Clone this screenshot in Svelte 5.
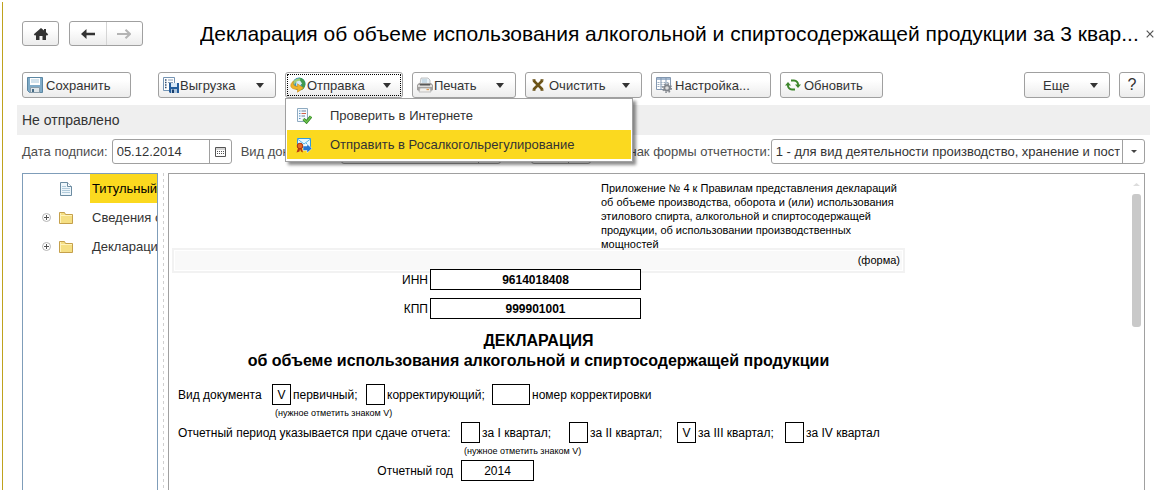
<script lang="ts">
	let menuOpen = $state(true);
	let signDate = $state('05.12.2014');
	let correction = $state('');
	let current = $state('title');

	const tree = [
		{ id: 'title', label: 'Титульный', folder: false },
		{ id: 'info', label: 'Сведения об организации', folder: true },
		{ id: 'decl', label: 'Декларация', folder: true }
	];

	const quarters = [
		{ label: 'за I квартал;', checked: false },
		{ label: 'за II квартал;', checked: false },
		{ label: 'за III квартал;', checked: true },
		{ label: 'за IV квартал', checked: false }
	];
</script>

{#snippet caret()}
	<svg class="caret" width="8" height="5" viewBox="0 0 8 5" aria-hidden="true"><path d="M0 0h8L4 5z" fill="#333" /></svg>
{/snippet}

{#snippet smallCaret()}
	<svg width="6" height="3" viewBox="0 0 6 3" aria-hidden="true"><path d="M0 0h6L3 3z" fill="#444" /></svg>
{/snippet}

<div class="page">
	<main class="window">
		<header>
			<button class="btn home" aria-label="Начальная страница">
				<svg width="16" height="14" viewBox="0 0 16 14"><path d="M8 1 .8 7.200l1.200 1.500 1-.7V13h3.500V9h3v4H13V8l1 .7 1.200-1.500L13 5.300V2h-2v1.600z" fill="#333" /></svg>
			</button>
			<div class="nav">
				<button aria-label="Назад">
					<svg width="14" height="10" viewBox="0 0 14 10"><path d="M0 5 5.500 0v3.700H14v2.600H5.500V10z" fill="#333" /></svg>
				</button>
				<button aria-label="Вперед">
					<svg width="14" height="10" viewBox="0 0 14 10"><path d="M8.500.7 13 5 8.500 9.300M12.500 5H0" fill="none" stroke="#b4b4b4" stroke-width="2" /></svg>
				</button>
			</div>
			<h1>Декларация об объеме использования алкогольной и спиртосодержащей продукции за 3 квар...</h1>
			<button class="close" aria-label="Закрыть">
				<svg width="8" height="8" viewBox="0 0 8 8"><path d="m.7.7 6.600 6.600M7.300.7.7 7.300" stroke="#555" stroke-width="1.200" /></svg>
			</button>
		</header>

		<div class="toolbar">
			<button class="btn save">
				<svg width="16" height="16" viewBox="0 0 16 16">
					<path d="M.5.5h15v15H2.500l-2-2z" fill="#7fabc8" stroke="#5c87a3" />
					<path d="M3 1h10v7H3z" fill="#fff" />
					<path d="M4 3h8M4 5h8" stroke="#a5c5d9" />
					<path d="M3.500 10.500h9v5h-9z" fill="#dfe6ea" stroke="#8a9daa" />
					<path d="M5 12h2v3H5z" fill="#486d87" />
				</svg>
				<span>Сохранить</span>
			</button>
			<button class="btn tight export">
				<svg width="16" height="16" viewBox="0 0 16 16">
					<path d="M.5.5h11v13H.5z" fill="#fff" stroke="#7595b5" />
					<path d="M2 3h1.500M2 5.500h1.500M2 8h1.500M2 10.500h1.500" stroke="#334f72" stroke-width="1.300" />
					<path d="M5 3h5M5 5.500h5" stroke="#8a9db3" />
					<path d="M6 6h10v10H7l-1-1z" fill="#245d9c" />
					<path d="M8 6h6v4H8z" fill="#d9e9f7" />
					<path d="M8 12h6v4H8z" fill="#adc5dc" />
					<path d="M9 12.500h2V16H9z" fill="#173d6c" />
				</svg>
				<span>Выгрузка</span>
				{@render caret()}
			</button>
			<div class="dropdown">
				<button class="btn tight send" aria-expanded={menuOpen} onclick={() => (menuOpen = !menuOpen)}>
					<svg width="16" height="16" viewBox="0 0 16 16">
						<circle cx="9" cy="7" r="6.500" fill="#3f93bd" />
						<path d="M9 .8c4 0 6.500 3 6.300 6.700-.2 3-2 5-4.300 5.700l1-5-4-3z" fill="#3f9a4e" />
						<path d="M3 5C4.500 1.800 8 .8 10.500 1.800L9.500 4 6 5.500 4 8z" fill="#9fce7c" />
						<path d="M6.500 4.500 10 3.500l2 3-3 3-3-1z" fill="#d9ecf5" />
						<path d="M3.500 4C-.5 7-.8 12.500 7.500 12.300v2.900l6-4.200-6-4.200v2.700C4 9.500 2.500 7.500 3.500 4z" fill="#f0b428" stroke="#cf9118" stroke-width=".6" />
					</svg>
					<span>Отправка</span>
					{@render caret()}
				</button>
				{#if menuOpen}
					<div class="menu" role="menu">
						<button role="menuitem">
							<svg width="16" height="16" viewBox="0 0 16 16">
								<path d="M1.500.5h10v13h-10z" fill="#f5faff" stroke="#8eaac0" />
								<path d="M3 3h1.500M3 5.500h1.500M3 8h1.500M3 10.500h1.500" stroke="#5b92bf" />
								<path d="M5.500 3H10M5.500 8H9" stroke="#68809a" />
								<path d="M5.500 5.500H10" stroke="#d46049" />
								<path d="m7.500 11 3 3L15 8.500" fill="none" stroke="#307f26" stroke-width="3" />
								<path d="m7.500 11 3 3L15 8.500" fill="none" stroke="#6bc24b" stroke-width="1.600" />
							</svg>
							<span>Проверить в Интернете</span>
						</button>
						<button class="active" role="menuitem">
							<svg width="16" height="16" viewBox="0 0 16 16">
								<path d="M1.500 1.500h13v9h-13z" fill="#e7f7ff" stroke="#319bdc" />
								<path d="m1.500 2 6.500 5 6.500-5M2 10l4-4m8 4-4-4" fill="none" stroke="#57b4e7" />
								<path d="M7 9h4V7l5 4.500-5 4.500v-2.500H7z" fill="#2777d0" stroke="#fff" stroke-width=".5" />
								<path d="m2.500 10-2 5.500 3-1L4 12l1 2.500 2 1L5.500 10z" fill="#b83513" />
								<circle cx="4" cy="9" r="2.800" fill="#e66a22" stroke="#aa3010" />
							</svg>
							<span>Отправить в Росалкогольрегулирование</span>
						</button>
					</div>
				{/if}
			</div>
			<button class="btn tight print">
				<svg width="16" height="16" viewBox="0 0 16 16">
					<path d="M4 1h7l2 2v4H3z" fill="#e9f1f6" stroke="#aaa" stroke-width=".7" />
					<path d="M5 3h5M5 5h5" stroke="#aac4d5" />
					<path d="M2 6h12l2 2v5l-2 1H2l-2-1V8z" fill="#a2a09e" />
					<path d="M1 8h14v2H1z" fill="#dedcda" />
					<path d="M3 7h10v1.500H3z" fill="#585858" />
					<path d="M3 11h10l1 4H2z" fill="#f2f0ed" stroke="#aaa" stroke-width=".7" />
					<path d="M9.500 12.500H12" stroke="#de9a51" stroke-width="1.300" />
				</svg>
				<span>Печать</span>
				{@render caret()}
			</button>
			<button class="btn clear">
				<svg width="16" height="16" viewBox="0 0 16 16"><path d="m3.500 3.500 9 9m0-9-9 9" stroke="#6b5318" stroke-width="2.600" /><path d="M2.500 3h3m5 0h3m-11 10h3m5 0h3" stroke="#6b5318" stroke-width="1.300" /></svg>
				<span>Очистить</span>
				{@render caret()}
			</button>
			<button class="btn setup">
				<svg width="16" height="16" viewBox="0 0 16 16">
					<path d="M.5.5h14v12H.5z" fill="#fff" stroke="#8297b0" />
					<path d="M1 1h13v2H1z" fill="#a6bad1" />
					<path d="M5 1v12m5-12v12" stroke="#8297b0" />
					<path d="M1.500 5.500h12m-12 2h12m-12 2h12" stroke="#9daec0" stroke-dasharray="2 1" />
					<circle cx="11" cy="11" r="4.300" fill="none" stroke="#858990" stroke-width="1.500" stroke-dasharray="1.700 1.670" />
					<circle cx="11" cy="11" r="2.700" fill="#ddd" stroke="#80858b" stroke-width="1.800" />
				</svg>
				<span>Настройка...</span>
			</button>
			<button class="btn refresh">
				<svg width="16" height="16" viewBox="0 0 16 16">
					<path d="M6 3.500h3A4 4 0 0 1 13 8M10 12.500H7A4 4 0 0 1 3 8" fill="none" stroke="#3d862b" stroke-width="2" />
					<path d="M10 7.500h6l-3 3.500zM0 8.500h6L3 5z" fill="#3d862b" />
				</svg>
				<span>Обновить</span>
			</button>
			<button class="btn more">
				<span>Еще</span>
				{@render caret()}
			</button>
			<button class="btn help" aria-label="Справка">?</button>
		</div>

		<div class="status">Не отправлено</div>

		<div class="fields">
			<label for="sign-date">Дата подписи:</label>
			<div class="field date">
				<input id="sign-date" bind:value={signDate} />
				<button aria-label="Выбрать дату">
					<svg width="11" height="10" viewBox="0 0 11 10"><path d="M.5.5h10v9H.5z" fill="none" stroke="#555" /><path d="M1 2h9" stroke="#aaa" /><path d="M2 4.500h7m-7 2h7" stroke="#555" stroke-dasharray="1 1" /></svg>
				</button>
			</div>
			<label class="kind-label" for="kind">Вид документа:</label>
			<div class="field kind">
				<select id="kind"><option>Первичный</option></select>
				<span class="drop">{@render smallCaret()}</span>
			</div>
			<label class="number-label" for="number">№:</label>
			<div class="field number">
				<input id="number" bind:value={correction} />
				<button aria-label="Выбрать номер">{@render smallCaret()}</button>
			</div>
			<label class="form-label" for="form-type">Признак формы отчетности:</label>
			<div class="field wide">
				<select id="form-type"><option>1 - для вид деятельности производство, хранение и поставка</option></select>
				<span class="drop">{@render smallCaret()}</span>
			</div>
		</div>

		<div class="panes">
			<nav class="tree" aria-label="Разделы">
				{#each tree as node (node.id)}
					<button class:current={current === node.id} onclick={() => (current = node.id)}>
						<span class="toggle">
							{#if node.folder}
								<svg width="9" height="9" viewBox="0 0 9 9"><circle cx="4.500" cy="4.500" r="4" fill="#fff" stroke="#b5b5b5" /><path d="M2 4.500h5M4.500 2v5" stroke="#555" /></svg>
							{/if}
						</span>
						{#if node.folder}
							<svg width="16" height="16" viewBox="0 0 16 16"><path d="M1.500 2.500h5l1 2h7v9h-13z" fill="#f5df83" stroke="#c5a04b" /><path d="M2 5.500h12M2.500 3v10" stroke="#fff3bb" /></svg>
						{:else}
							<svg width="16" height="16" viewBox="0 0 16 16"><path d="M2.500 1.500h7l4 4v9h-11z" fill="#eef6fb" stroke="#6b8ba1" /><path d="M9.500 1.500v4h4" fill="#fff" stroke="#6b8ba1" /><path d="M4 5.500h4m-4 2h8m-8 2h8m-8 2h8" stroke="#b1cbdb" /></svg>
						{/if}
						<span class="name">{node.label}</span>
					</button>
				{/each}
			</nav>
			<div class="splitter"></div>
			<section class="document">
				<form class="sheet">
					<p class="appendix">
						Приложение № 4 к Правилам представления деклараций<br />
						об объеме производства, оборота и (или) использования<br />
						этилового спирта, алкогольной и спиртосодержащей<br />
						продукции, об использовании производственных<br />
						мощностей
					</p>
					<div class="band">(форма)</div>
					<div class="codes">
						<label for="inn">ИНН</label>
						<input id="inn" value="9614018408" />
						<label for="kpp">КПП</label>
						<input id="kpp" value="999901001" />
					</div>
					<h2>ДЕКЛАРАЦИЯ<br />об объеме использования алкогольной и спиртосодержащей продукции</h2>
					<div class="line kind-line">
						<span class="caption">Вид документа</span>
						<label class="primary"><input type="checkbox" checked />первичный;</label>
						<label class="corrective"><input type="checkbox" />корректирующий;</label>
						<label><input class="corr-number" type="text" />номер корректировки</label>
					</div>
					<p class="note note-kind">(нужное отметить знаком V)</p>
					<div class="line period-line">
						<span class="caption">Отчетный период указывается при сдаче отчета:</span>
						{#each quarters as quarter (quarter.label)}
							<label><input type="checkbox" checked={quarter.checked} />{quarter.label}</label>
						{/each}
					</div>
					<p class="note note-period">(нужное отметить знаком V)</p>
					<div class="line year-line">
						<label class="caption" for="year">Отчетный год</label>
						<input id="year" type="text" value="2014" />
					</div>
				</form>
				<div class="scroll">
					<svg width="7" height="3" viewBox="0 0 7 3"><path d="M0 3h7L3.500 0z" fill="#ddd" /></svg>
					<div class="thumb"></div>
				</div>
			</section>
		</div>
	</main>
</div>

<style>
	:global(body) {
		background: #fff;
	}

	* {
		box-sizing: border-box;
	}

	.page {
		height: 100vh;
		padding: 2px 0 2px 2px;
		font: 13px 'Liberation Sans', Arial, sans-serif;
		color: #333;
	}

	.window {
		display: flex;
		flex-direction: column;
		height: 100%;
		padding: 19px 27px 0 19px;
		border-left: 1px solid #bfa21e;
	}

	button,
	input,
	select {
		font: inherit;
		color: inherit;
	}

	button {
		padding: 0;
		background: none;
		border: 0;
	}

	svg {
		display: block;
		flex: none;
	}

	header {
		display: flex;
		align-items: center;
		height: 25px;
		margin-right: -9px;
	}

	.btn,
	.nav {
		display: flex;
		align-items: center;
		flex: none;
		background: linear-gradient(#fff 30%, #ececec);
		border: 1px solid #a0a0a0;
		border-radius: 3px;
	}

	.home {
		justify-content: center;
		width: 37px;
		height: 25px;
	}

	.nav {
		width: 74px;
		height: 25px;
		margin-left: 10px;
	}

	.nav button {
		display: flex;
		flex: 1;
		align-items: center;
		justify-content: center;
		height: 100%;
	}

	.nav button + button {
		border-left: 1px solid #d5d5d5;
	}

	h1 {
		flex: 1;
		min-width: 0;
		margin: 0 4px 0 57px;
		overflow: hidden;
		font-size: 21px;
		font-weight: normal;
		line-height: 28px;
		color: #000;
		white-space: nowrap;
	}

	.toolbar {
		display: flex;
		gap: 9px;
		margin-top: 26px;
	}

	.toolbar .btn {
		gap: 3px;
		height: 26px;
		padding: 0 11px 0 4px;
		white-space: nowrap;
	}

	.toolbar .tight {
		gap: 1px;
	}

	.toolbar .caret {
		margin-left: auto;
	}

	.toolbar .save {
		width: 109px;
		margin-right: 18px;
	}

	.toolbar .export,
	.toolbar .send {
		width: 118px;
	}

	.toolbar .clear {
		width: 117px;
	}

	.toolbar .print {
		width: 104px;
	}

	.toolbar .setup {
		width: 120px;
	}

	.toolbar .refresh {
		width: 103px;
	}

	.toolbar .more {
		width: 86px;
		margin-left: auto;
		padding-left: 18px;
	}

	.toolbar .help {
		justify-content: center;
		width: 26px;
		padding: 0;
		font-size: 16px;
	}

	.dropdown {
		position: relative;
	}

	.send {
		outline: 1px dotted #000;
		outline-offset: -3px;
	}

	.menu {
		position: absolute;
		top: 100%;
		left: 0;
		z-index: 2;
		width: 348px;
		padding: 2px 1px;
		background: #fff;
		border: 1px solid #a0a0a0;
		box-shadow: 3px 3px 3px rgba(0, 0, 0, 0.45);
	}

	.menu button {
		display: flex;
		align-items: center;
		gap: 18px;
		width: 100%;
		height: 29px;
		padding-left: 9px;
	}

	.menu .active {
		background: #fbd91f;
	}

	.status {
		height: 30px;
		margin: 7px -5px 0;
		padding-left: 5px;
		font-size: 14px;
		line-height: 30px;
		background: #efefef;
	}

	.fields {
		display: flex;
		align-items: center;
		gap: 4px;
		margin-top: 4px;
	}

	.fields label {
		flex: none;
		color: #4d4d4d;
		white-space: nowrap;
	}

	.fields .kind-label {
		width: 96px;
	}

	.fields .number-label {
		width: 17px;
	}

	.fields .form-label {
		width: 167px;
	}

	.field {
		display: flex;
		flex: none;
		height: 25px;
		margin-right: 5px;
		border: 1px solid #a0a0a0;
		border-radius: 3px;
	}

	.field input,
	.field select {
		flex: 1;
		min-width: 0;
		padding: 0 2px 0 4px;
		appearance: none;
		background: none;
		border: 0;
		outline: none;
	}

	.field button,
	.drop {
		display: flex;
		flex: none;
		align-items: center;
		justify-content: center;
		width: 22px;
		border-left: 1px solid #a0a0a0;
	}

	.date {
		width: 120px;
	}

	.kind {
		width: 160px;
	}

	.number {
		width: 60px;
	}

	.wide {
		flex: 1;
		min-width: 0;
		margin-right: 0;
	}

	.panes {
		display: flex;
		flex: 1;
		min-height: 0;
		margin-top: 9px;
	}

	.tree {
		flex: none;
		width: 136px;
		overflow: hidden;
		border: 1px solid #7f9db9;
		border-bottom: 0;
	}

	.tree button {
		display: flex;
		align-items: center;
		width: 100%;
		height: 29px;
		padding-left: 19px;
		text-align: left;
		white-space: nowrap;
	}

	.toggle {
		flex: none;
		width: 16px;
	}

	.name {
		flex: 1;
		min-width: 0;
		margin-left: 16px;
		padding-left: 2px;
		overflow: hidden;
		line-height: 29px;
	}

	.current .name {
		color: #000;
		background: #fbd91f;
	}

	.splitter {
		flex: none;
		width: 1px;
		margin: 0 4px 0 5px;
		background: repeating-linear-gradient(#d0d0d0 0 3px, transparent 3px 6px);
	}

	.document {
		display: flex;
		flex: 1;
		justify-content: space-between;
		min-width: 0;
		padding: 0 3px;
		overflow: hidden;
		border: 1px solid #a0a0a0;
		border-bottom: 0;
	}

	.sheet {
		flex: none;
		width: 733px;
		padding-top: 7px;
		font-size: 12px;
		color: #000;
	}

	.appendix {
		margin: 0 0 0 429px;
		font-size: 11px;
		line-height: 14px;
		white-space: nowrap;
	}

	.band {
		height: 25px;
		margin-top: -3px;
		padding-right: 3px;
		font-size: 11px;
		line-height: 21px;
		text-align: right;
		background: #f9f9f9;
		border: 2px solid #f2f2f2;
		box-shadow: inset 0 0 0 1px #fff;
	}

	.sheet input {
		flex: none;
		height: 21px;
		margin: 0;
		padding: 0;
		appearance: none;
		text-align: center;
		background: #fff;
		border: 1px solid #000;
		border-radius: 0;
	}

	.codes {
		display: grid;
		grid-template-columns: 256px 211px;
		gap: 8px 2px;
		align-items: center;
		margin-top: -4px;
	}

	.codes label {
		text-align: right;
	}

	.codes input {
		font-weight: bold;
	}

	h2 {
		margin: 12px 0 13px;
		font-size: 16px;
		line-height: 20px;
		text-align: center;
		white-space: nowrap;
	}

	.line {
		display: flex;
		align-items: center;
		padding-left: 6px;
		white-space: nowrap;
	}

	.line label:not(.caption) {
		display: flex;
		flex: none;
		align-items: center;
		gap: 2px;
	}

	.line input[type='checkbox'] {
		display: grid;
		place-content: center;
		width: 19px;
	}

	.line input[type='checkbox']:checked::before {
		content: 'V';
	}

	.caption {
		flex: none;
	}

	.kind-line .caption,
	.line .primary {
		width: 94px;
	}

	.line .corrective {
		width: 126px;
	}

	.line .corr-number {
		width: 38px;
	}

	.period-line .caption {
		width: 283px;
	}

	.period-line label {
		width: 108px;
	}

	.year-line .caption {
		width: 283px;
		padding-right: 8px;
		text-align: right;
	}

	#year {
		width: 73px;
	}

	.note {
		margin: 0;
		font-size: 9px;
		line-height: 17px;
	}

	.note-kind {
		padding-left: 103px;
	}

	.note-period {
		padding-left: 292px;
	}

	.scroll {
		display: flex;
		flex: none;
		flex-direction: column;
		align-items: center;
		gap: 8px;
		width: 9px;
		padding-top: 9px;
	}

	.thumb {
		width: 9px;
		height: 133px;
		background: #c9c9c9;
		border-radius: 3px;
	}
</style>
